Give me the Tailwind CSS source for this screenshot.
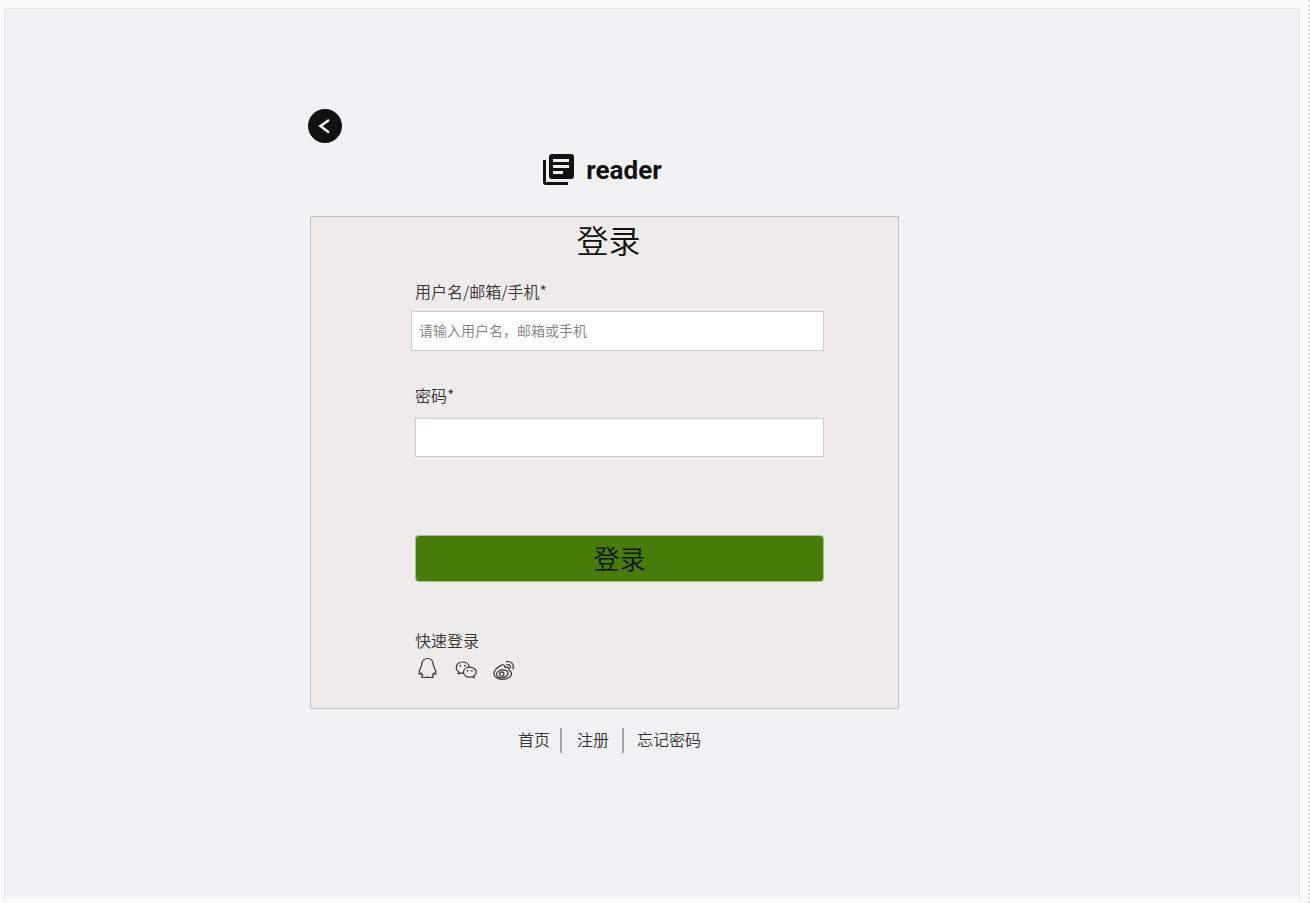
<!DOCTYPE html>
<html lang="zh-CN">
<head>
<meta charset="utf-8">
<meta name="viewport" content="width=device-width, initial-scale=1">
<title>登录 - reader</title>
<script src="https://cdn.jsdelivr.net/npm/@tailwindcss/browser@4"></script>
</head>
<body class="bg-[#fafafa] font-['Noto_Sans_CJK_SC',sans-serif] font-[350] text-[#111]">
<div class="flex min-h-screen border-r-2 border-dotted border-[#dcdcdc] pt-2 pr-2 pl-1">
  <div class="flex grow flex-col border-x border-t border-[#e6e6e6] pb-[5px]">
    <main class="grow bg-[#f2f2f4] pt-[100px] pr-[97px] pb-8">
      <div class="mx-auto max-w-[591px]">
        <button type="button" aria-label="返回" class="flex size-[34px] items-center justify-center rounded-full bg-[#111]">
          <svg class="size-[34px]" viewBox="0 0 34 34" fill="none" stroke="#f2f2f4" stroke-width="2.6"><path d="M21 11 12.500 17 21 23.500"/></svg>
        </button>
        <div class="mt-[11px] flex h-8 items-center justify-center gap-3 pr-[3px]">
          <svg class="size-8" viewBox="0 0 32 32" fill="#111"><path d="M1 6h3v22h22v3H4a3 3 0 0 1-3-3z"/><path fill-rule="evenodd" d="M10 0h19a3 3 0 0 1 3 3v19a3 3 0 0 1-3 3H10a3 3 0 0 1-3-3V3a3 3 0 0 1 3-3zm1 5v3h16V5zm0 6v3h16v-3zm0 6v3h10v-3z"/></svg>
          <span class="font-['Roboto',sans-serif] text-[26px] leading-8 font-bold">reader</span>
        </div>
        <section class="mt-[30px] ml-[2px] border border-[#c1c1c3] bg-[#efebea] pb-[27px]">
          <h1 class="pl-2 text-center text-[32px] leading-[44px]">登录</h1>
          <form class="mt-[18px] pr-[74px] pl-[100px]">
            <label for="user" class="block pl-1 text-base leading-6 text-[#333]">用户名/邮箱/手机*</label>
            <input id="user" type="text" placeholder="请输入用户名，邮箱或手机" class="mt-2 block h-10 w-full border border-[#cfcfcf] bg-white px-[7px] pb-[2px] text-sm placeholder:text-[#808080]">
            <div class="pl-1">
              <label for="password" class="mt-8 block text-base leading-6 text-[#333]">密码*</label>
              <input id="password" type="password" class="mt-[11px] block h-[39px] w-full border border-[#cfcfcf] bg-white px-[7px] text-sm">
              <button type="submit" class="mt-[78px] block h-[47px] w-full rounded-sm border border-[#a9b99c] bg-[#477c08] pb-[2px] text-[26px] leading-10">登录</button>
              <h2 class="mt-[46px] text-base leading-6 text-[#333]">快速登录</h2>
              <div class="mt-[5px] flex gap-[14px]">
                <a href="#qq" aria-label="QQ" class="size-6">
                  <svg class="size-6" viewBox="0 0 24 24" fill="none" stroke="#333" stroke-width="1.2" stroke-linejoin="round"><path d="M12.500 1.500C9.200 1.500 7 3.800 6.800 7.500C6.700 9.500 5.200 11.500 4.500 13.500C3.800 15.500 4 17.300 4.600 17.300C5.200 17.300 5.800 16.500 6.300 15.800C6.700 17.300 7.300 18 7.800 18.500C6.300 19.200 6.500 20.500 7.500 20.500H11.500L12.500 19.800L13.500 20.500H17.500C18.500 20.500 18.700 19.200 17.200 18.500C17.700 18 18.300 17.300 18.700 15.800C19.200 16.500 19.800 17.300 20.400 17.300C21 17.300 21.200 15.500 20.500 13.500C19.800 11.500 18.300 9.500 18.200 7.500C18 3.800 15.800 1.500 12.500 1.500Z"/></svg>
                </a>
                <a href="#wechat" aria-label="微信" class="size-6">
                  <svg class="size-6" viewBox="0 0 24 24" fill="none" stroke="#333" stroke-width="1.2" stroke-linejoin="round"><path d="M16.300 10C16 7 13.200 5 9.700 5C6 5 3.200 7.300 3.200 10.500C3.200 12.400 4.200 13.800 5.700 14.800L5 17L7.700 15.900C8.700 16.200 9.800 16.300 10.900 16.100"/><path d="M16.600 10.200C13.100 10.200 10.500 12.300 10.500 15.100C10.500 18 13.100 20.100 16.600 20.100C17.400 20.100 18.200 20 18.900 19.700L21.400 20.800L20.800 18.800C22.300 17.900 23.200 16.600 23.200 15.100C23.200 12.300 20.200 10.200 16.600 10.200Z"/><path fill="#333" stroke="none" d="M6.500 8h1.600v1.600H6.500zM11.200 8h1.600v1.600h-1.600zM13.700 13h1.500v1.500h-1.500zM18.200 13h1.500v1.500h-1.500z"/></svg>
                </a>
                <a href="#weibo" aria-label="微博" class="size-6">
                  <svg class="size-6" viewBox="0 0 24 24" fill="none" stroke="#333" stroke-width="1.2" stroke-linejoin="round" stroke-linecap="round"><path d="M17.800 13.200C18.600 10.800 17.300 9.500 14 10.600C14.500 7.700 12 7 8.500 9.200C5.200 11.200 3 14 3 16.800C3 20.200 6.800 22.300 11.300 22.300C16.500 22.300 20.500 19.800 20.500 16.800C20.500 14.800 19.300 13.700 17.800 13.200Z"/><ellipse cx="11.300" cy="16.800" rx="5.800" ry="3.900" transform="rotate(-8 11.300 16.800)"/><circle cx="10.800" cy="17" r="2.100"/><path d="M15.500 4.700C19.700 3.700 23.500 7 22 12M16 7.700C18.400 7.200 20 8.800 19.300 11"/></svg>
                </a>
              </div>
            </div>
          </form>
        </section>
        <nav class="mt-[19px] flex justify-center pl-3 text-base leading-[22px] text-[#333]">
          <a href="#home" class="border-r-2 border-[#a9a9ad] pr-[10px] pb-[3px]">首页</a>
          <a href="#register" class="border-r-2 border-[#a9a9ad] pr-[13px] pb-[3px] pl-[15px]">注册</a>
          <a href="#forgot" class="pb-[3px] pl-[13px]">忘记密码</a>
        </nav>
      </div>
    </main>
  </div>
</div>
</body>
</html>
